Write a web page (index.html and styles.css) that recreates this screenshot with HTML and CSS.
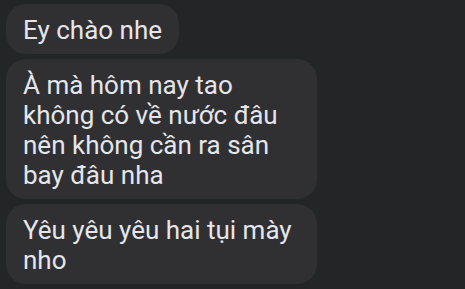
FILE: index.html
```html
<!DOCTYPE html>
<html lang="vi">
<head>
<meta charset="utf-8">
<link rel="stylesheet" href="styles.css">
</head>
<body>
<div class="thread">
  <div class="bubble">Ey chào nhe</div>
  <div class="bubble">À mà hôm nay tao không có về nước đâu nên không cần ra sân bay đâu nha</div>
  <div class="bubble">Yêu yêu yêu hai tụi mày nho</div>
</div>
</body>
</html>
```
FILE: styles.css
```css
html, body {
  margin: 0;
  padding: 0;
  background: #242527;
  height: 100%;
}
.thread {
  display: flex;
  flex-direction: column;
  align-items: flex-start;
  gap: 5px;
  padding: 4px 6px;
}
.bubble {
  background: #303033;
  color: #e4e6eb;
  font-family: Roboto, "Noto Sans", sans-serif;
  font-size: 26px;
  line-height: 30px;
  padding: 11px 17px 9px;
  border-radius: 20px;
  max-width: 277px;
}
```
